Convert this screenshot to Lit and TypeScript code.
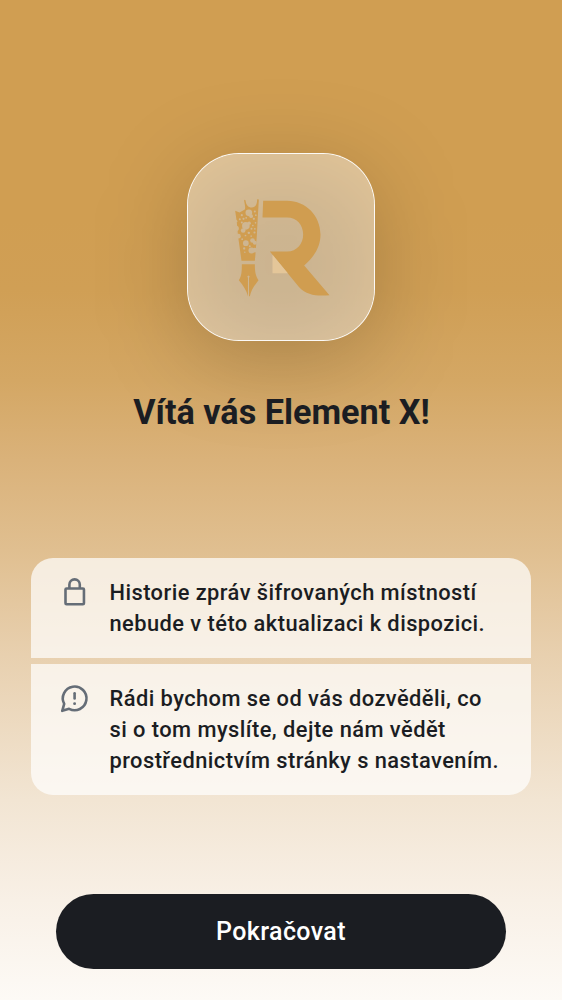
import { LitElement, html, css, svg } from "lit";
import { customElement } from "lit/decorators.js";

/* Holes of the lace part of the pen: cx, cy, r */
const HOLES: number[][] = [
  [70, 67, 10], [77, 77, 5.5], [49, 74, 3.2], [43, 86, 3], [54, 85, 3.2], [62, 82, 2.6],
  [49, 96, 3], [88, 63, 3], [91, 74, 2.5], [85, 85, 3.4], [90, 97, 2.4], [61, 106, 11.5],
  [71, 98, 5], [53, 120, 7], [82, 105, 2.6], [88, 115, 2.6], [78, 115, 3], [70, 127, 3.6],
  [87, 126, 3.2], [77, 137, 2.4], [60, 135, 2.6], [39, 137, 7],
  [61, 158, 8.5], [81, 150, 7], [88, 157, 6], [73, 167, 3], [78, 180, 9], [88, 179, 7],
  [56, 174, 3.4], [58, 185, 2.2], [32, 92, 3.5], [32, 114, 8], [50, 146, 2.6],
];

@customElement("app-root")
export class AppRoot extends LitElement {
  static styles = css`
    :host {
      display: block;
      font-family: Roboto, "Liberation Sans", sans-serif;
      color: #1b1d22;
    }
    .screen {
      box-sizing: border-box;
      height: 1000px;
      display: flex;
      flex-direction: column;
      align-items: center;
      padding: 153px 31px 31px;
      overflow: hidden;
      background: linear-gradient(
        #d09e52 0, #d09e52 220px, #d09f55 290px, #d4a764 380px, #dab27a 460px,
        #e0bf90 550px, #e8d0af 655px, #f2e5d3 800px, #f8f0e6 900px, #fdfaf6 1000px
      );
    }
    .tile {
      position: relative;
      width: 188px;
      height: 188px;
      flex: none;
    }
    .shadow {
      position: absolute;
      inset: 17px 0 -17px;
      border-radius: 51px;
      background: rgba(0, 0, 0, 0.2);
      filter: blur(44px);
    }
    .glass {
      position: relative;
      box-sizing: border-box;
      width: 188px;
      height: 188px;
      border: 1px solid rgba(255, 255, 255, 0.95);
      border-radius: 52px;
      background: rgba(255, 255, 255, 0.41);
      background-clip: padding-box;
      display: grid;
      place-items: center;
    }
    .logo {
      width: 115px;
      height: 115px;
      display: block;
    }
    h1 {
      position: relative;
      margin: 49px 0 0;
      padding-left: 1px;
      font-size: 34.2px;
      line-height: 44px;
      font-weight: 700;
      white-space: nowrap;
    }
    .list {
      align-self: stretch;
      margin-top: 124px;
      display: flex;
      flex-direction: column;
      gap: 6px;
      border-radius: 22px;
      overflow: hidden;
    }
    .row {
      box-sizing: border-box;
      display: flex;
      gap: 19.3px;
      padding: 18.6px 28px;
      background: rgba(255, 255, 255, 0.7);
    }
    .row.first {
      height: 100px;
    }
    .row.second {
      height: 131px;
    }
    .icon {
      width: 31.2px;
      height: 31.2px;
      flex: none;
      color: #656d77;
    }
    .text {
      font-size: 21.85px;
      line-height: 31.2px;
      font-weight: 500;
      letter-spacing: 0.45px;
      white-space: nowrap;
    }
    button {
      margin-top: auto;
      width: 450px;
      height: 75px;
      border: 0;
      border-radius: 38px;
      background: #1b1d22;
      color: #fff;
      font: 500 25px/37px Roboto, "Liberation Sans", sans-serif;
      letter-spacing: 0.4px;
    }
  `;

  private logo() {
    return svg`
      <svg class="logo" viewBox="-4.5 -1.5 345 345">
        <mask id="lace" maskUnits="userSpaceOnUse" x="0" y="0" width="130" height="345">
          <rect width="130" height="345" fill="#fff" />
          ${HOLES.map(([x, y, r]) => svg`<circle cx=${x} cy=${y} r=${r} fill="#000" />`)}
        </mask>
        <g fill="#d09d50">
          <path d="M113 31H185C241 31 285 76 285 132C285 170 265 200 236 225L312 314C276 318 244 314 221 290L133 183H185C214 183 233 160 233 132C233 102 213 81 185 81H111Z" />
          <path mask="url(#lace)" d="M29 61L42 66L58 57C61 48 56 38 56 28L60 29C61 42 68 51 79 51C90 51 95 41 95 26L100 27L97 78L94 135L90 190L88 211H48L39 146L37 130L34 95Z" />
          <path d="M49 221H88C88 242 90 255 99 269C86 286 77 299 73 317H70.6V261A3 3 0 1 0 67.4 261V317C63 299 54 286 40 269C49 255 49 240 49 221Z" />
        </g>
        <path d="M141 193L187 248H141Z" fill="#e4c699" />
      </svg>`;
  }

  render() {
    return html`
      <main class="screen">
        <div class="tile">
          <div class="shadow"></div>
          <div class="glass">${this.logo()}</div>
        </div>
        <h1>Vítá vás Element X!</h1>
        <section class="list">
          <div class="row first">
            <svg class="icon" viewBox="0 0.2 24 24" fill="none" stroke="currentColor" stroke-width="2">
              <rect x="5" y="9" width="14.2" height="12.2" rx="0.8" />
              <path d="M8 9V6a4 4 0 0 1 8 0v3" />
            </svg>
            <div class="text">Historie zpráv šifrovaných místností<br />nebude v této aktualizaci k dispozici.</div>
          </div>
          <div class="row second">
            <svg class="icon" viewBox="0 0.1 24 24" fill="none" stroke="currentColor" stroke-width="2" stroke-linejoin="round">
              <path d="M4 16.2A9.1 9.1 0 1 1 7.8 20L2.5 21.5Z" />
              <path d="M12 8v4" stroke-linecap="round" />
              <circle cx="12" cy="16" r="1.1" fill="currentColor" stroke="none" />
            </svg>
            <div class="text">Rádi bychom se od vás dozvěděli, co<br />si o tom myslíte, dejte nám vědět<br />prostřednictvím stránky s nastavením.</div>
          </div>
        </section>
        <button>Pokračovat</button>
      </main>
    `;
  }
}
